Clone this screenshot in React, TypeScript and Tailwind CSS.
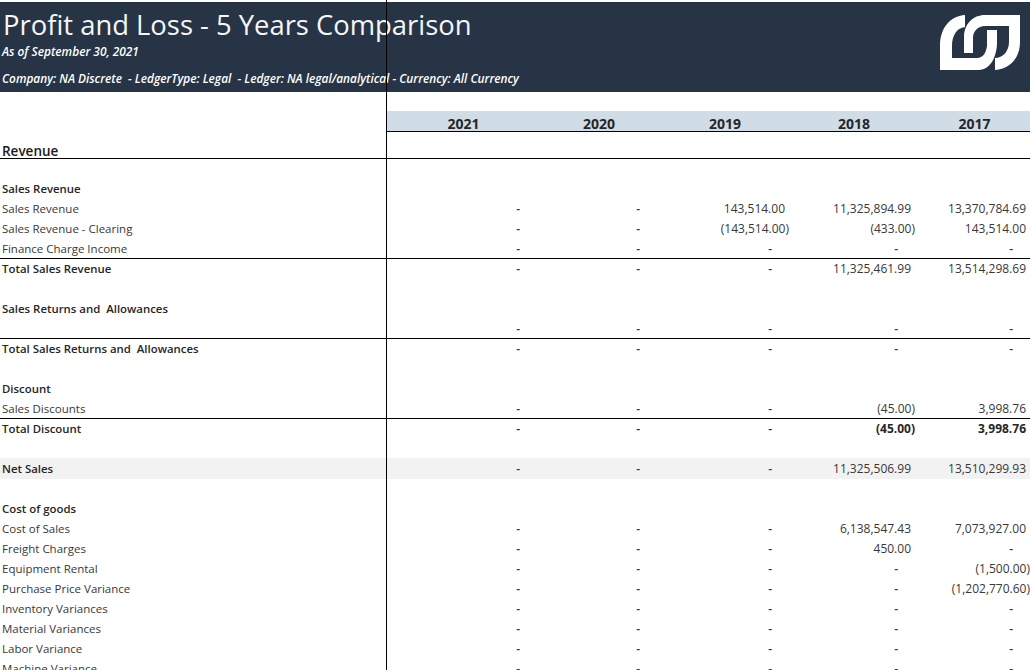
const cols = "grid grid-cols-[387px_151px_120px_132px_126px_115px]";

type Row = {
  label?: string;
  vals?: string[];
  bold?: boolean;
  line?: boolean;
  shade?: boolean;
  strongNums?: boolean;
};

const dashes = ["-", "-", "-", "-", "-"];

const rows: Row[] = [
  {},
  { label: "Sales Revenue", bold: true },
  { label: "Sales Revenue", vals: ["-", "-", "143,514.00", "11,325,894.99", "13,370,784.69"] },
  { label: "Sales Revenue - Clearing", vals: ["-", "-", "(143,514.00)", "(433.00)", "143,514.00"] },
  { label: "Finance Charge Income", vals: dashes, line: true },
  { label: "Total Sales Revenue", bold: true, vals: ["-", "-", "-", "11,325,461.99", "13,514,298.69"] },
  {},
  { label: "Sales Returns and  Allowances", bold: true },
  { vals: dashes, line: true },
  { label: "Total Sales Returns and  Allowances", bold: true, vals: dashes },
  {},
  { label: "Discount", bold: true },
  { label: "Sales Discounts", vals: ["-", "-", "-", "(45.00)", "3,998.76"], line: true },
  { label: "Total Discount", bold: true, strongNums: true, vals: ["-", "-", "-", "(45.00)", "3,998.76"] },
  {},
  { label: "Net Sales", bold: true, shade: true, vals: ["-", "-", "-", "11,325,506.99", "13,510,299.93"] },
  {},
  { label: "Cost of goods", bold: true },
  { label: "Cost of Sales", vals: ["-", "-", "-", "6,138,547.43", "7,073,927.00"] },
  { label: "Freight Charges", vals: ["-", "-", "-", "450.00", "-"] },
  { label: "Equipment Rental", vals: ["-", "-", "-", "-", "(1,500.00)"] },
  { label: "Purchase Price Variance", vals: ["-", "-", "-", "-", "(1,202,770.60)"] },
  { label: "Inventory Variances", vals: dashes },
  { label: "Material Variances", vals: dashes },
  { label: "Labor Variance", vals: dashes },
  { label: "Machine Variance", vals: dashes },
];

// accounting format: numbers sit 5px in from the cell edge, negatives hang into it, dashes sit further in
const Amount = ({ v, strong }: { v: string; strong?: boolean }) => {
  const weight = strong ? "font-bold text-[#262626]" : "text-[#383838]";
  if (v === "-") {
    return <div className={`text-right text-[12px] font-semibold pr-[18px] ${strong ? "text-[#262626]" : "text-[#383838]"}`}>-</div>;
  }
  if (v.startsWith("(")) {
    return <div className={`text-right text-[12px] pr-px whitespace-nowrap ${weight}`}>{v}</div>;
  }
  return <div className={`text-right text-[12px] pr-[5px] whitespace-nowrap ${weight}`}>{v}</div>;
};

const Logo = () => (
  <svg width="80" height="55" viewBox="0 0 80 55" fill="white">
    {/* left link, square corner bottom left */}
    <path d="M0 55V31C0 13 10 1 25 0V12C17 13 12 20 12 31V43H37C43 43 46 38 47 31V15H57V29C56 45 49 55 38 55Z" />
    {/* right link, square corner top right */}
    <path d="M80 0V27C80 43 70 54 55 55V43C63 43 69 36 69 27V11H45C38 11 33 16 33 23V38H24V22C24 9 33 0 45 0Z" />
  </svg>
);

export default function App() {
  return (
    <div className="relative h-[670px] w-[1030px] overflow-hidden bg-white pt-[2px] font-['Open_Sans',sans-serif] text-[11.5px]">
      <header className="flex h-[90px] justify-between bg-[#273445] pl-[3px] pr-[10px] text-white">
        <div>
          <h1 className="h-[43px] whitespace-nowrap text-[27.4px] leading-[46px] text-[#f4f6f8]">
            Profit and Loss - 5 Years Comparison
          </h1>
          <p className="-ml-px h-[27px] text-[11.9px] font-semibold italic leading-[12px]">As of September 30, 2021</p>
          <p className="-ml-px whitespace-pre text-[11.85px] font-semibold italic leading-[12px]">
            Company: NA Discrete  - LedgerType: Legal  - Ledger: NA legal/analytical - Currency: All Currency
          </p>
        </div>
        <div className="pt-[13px]">
          <Logo />
        </div>
      </header>

      <div className={`${cols} mt-[19px] h-[21px]`}>
        <div />
        {["2021", "2020", "2019", "2018", "2017"].map((y) => (
          <div
            key={y}
            className="h-[21px] border-b border-black bg-[#d0dde6] pl-[2px] pt-[4px] text-center text-[14px] font-bold leading-[18px] text-[#262626]"
          >
            {y}
          </div>
        ))}
      </div>

      <div className="h-[27px] border-b border-black pl-[2px] pt-[10px] text-[13.5px] font-semibold leading-[18px] text-[#1a1a1a]">
        Revenue
      </div>

      {rows.map((r, i) => (
        <div
          key={i}
          className={`${cols} items-center leading-[20px] ${r.line ? "border-b border-black" : ""} ${r.shade ? "-mt-px h-[21px] bg-[#f2f2f2] pt-px" : "h-[20px]"}`}
        >
          <div className={`whitespace-pre pl-[2px] ${r.bold ? "text-[11.4px] font-semibold text-[#262626]" : "text-[#383838]"}`}>
            {r.label}
          </div>
          {r.vals?.map((v, j) => <Amount key={j} v={v} strong={r.strongNums} />)}
        </div>
      ))}

      {/* frozen pane divider runs over everything */}
      <div className="absolute bottom-0 left-[386px] top-0 w-px bg-black" />
    </div>
  );
}
